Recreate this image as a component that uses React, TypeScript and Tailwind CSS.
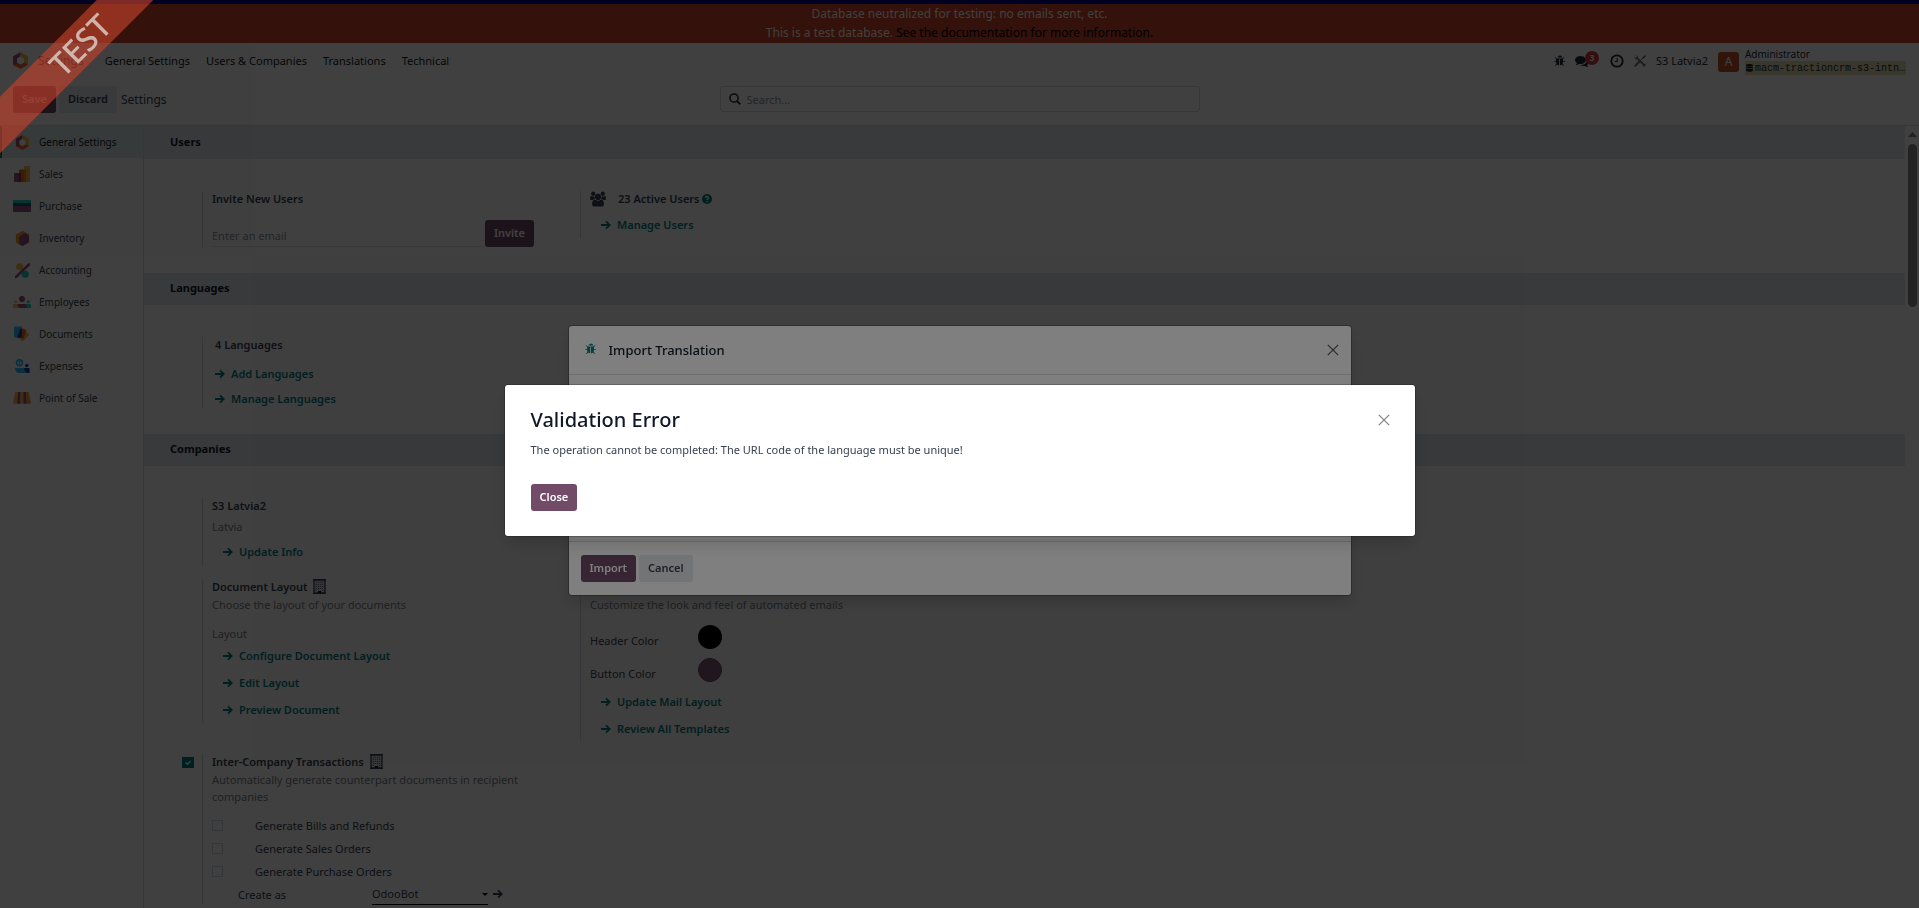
import type { ReactNode } from "react";

/* ---------- glyph icons ---------- */

const Bug = ({ className }: { className: string }) => (
  <svg viewBox="0 0 1792 1792" fill="currentColor" className={className} aria-hidden="true">
    <path d="M1632 960q0 26-19 45t-45 19h-224q0 171-67 290l208 209q19 19 19 45t-19 45q-18 19-45 19t-45-19l-198-197q-5 5-15 13t-42 28.500-65 36.500-82 29-97 13v-896h-128v896q-51 0-101.500-13.500t-87-33-66-39-43.500-32.500l-15-14-183 207q-20 21-48 21-24 0-43-16-19-18-20.500-44.500t15.500-46.500l202-227q-58-114-58-274h-224q-26 0-45-19t-19-45 19-45 45-19h224v-294l-173-173q-19-19-19-45t19-45 45-19 45 19l173 173h844l173-173q19-19 45-19t45 19 19 45-19 45l-173 173v294h224q26 0 45 19t19 45zm-416-576h-640q0-133 93.500-226.500t226.500-93.500 226.500 93.500 93.500 226.500z" />
  </svg>
);

const Comments = () => (
  <svg viewBox="0 0 1792 1792" fill="currentColor" className="h-[14px] w-[14px]" aria-hidden="true">
    <path d="M1408 768q0 139-94 257t-256.500 186.500-353.500 68.500q-86 0-176-16-124 88-278 128-36 9-86 16h-3q-11 0-20.500-8t-11.500-21q-1-3-1-6.500t.5-6.500 2-6l2.500-5 3.500-5.500 4-5 4.500-5 4-4.500q5-6 23-25t26-29.500 22.500-29 25-38.500 20.500-44q-124-72-195-177t-71-224q0-139 94-257t256.500-186.500 353.500-68.500 353.500 68.500 256.500 186.500 94 257zm384 256q0 120-71 224.500t-195 176.500q10 24 20.500 44t25 38.500 22.500 29 26 29.500 23 25q1 1 4 4.500t4.500 5 4 5 3.500 5.500l2.500 5 2 6 .5 6.500-1 6.500q-3 14-13 22t-22 7q-50-7-86-16-154-40-278-128-90 16-176 16-271 0-472-132 58 4 88 4 161 0 309-45t264-129q125-92 192-212t67-254q0-77-23-152 129 71 204 178t75 230z" />
  </svg>
);

const Users = () => (
  <svg viewBox="0 0 1920 1792" fill="currentColor" className="h-4 w-4" aria-hidden="true">
    <path d="M593 896q-162 5-265 128h-134q-82 0-138-40.500t-56-118.500q0-353 124-353 6 0 43.500 21t97.500 42.500 119 21.500q67 0 133-23-5 37-5 66 0 139 81 256zm1071 637q0 120-73 189.500t-194 69.500h-874q-121 0-194-69.500t-73-189.500q0-53 3.500-103.500t14-109 26.500-108.500 43-97.500 62-81 85.500-53.500 111.500-20q10 0 43 21.500t73 48 107 48 135 21.500 135-21.500 107-48 73-48 43-21.500q61 0 111.500 20t85.500 53.500 62 81 43 97.500 26.500 108.500 14 109 3.500 103.500zm-1024-1277q0 106-75 181t-181 75-181-75-75-181 75-181 181-75 181 75 75 181zm704 384q0 159-112.500 271.500t-271.500 112.500-271.500-112.500-112.500-271.500 112.500-271.500 271.500-112.500 271.500 112.500 112.500 271.500zm576 225q0 78-56 118.500t-138 40.500h-134q-103-123-265-128 81-117 81-256 0-29-5-66 66 23 133 23 59 0 119-21.500t97.500-42.500 43.500-21q124 0 124 353zm-128-609q0 106-75 181t-181 75-181-75-75-181 75-181 181-75 181 75 75 181z" />
  </svg>
);

const Clock = () => (
  <svg viewBox="0 0 14 14" fill="none" stroke="currentColor" className="h-[14px] w-[14px]" aria-hidden="true">
    <circle cx="7" cy="7" r="5.700" strokeWidth="1.800" />
    <path d="M7.300 3.800v3.700H4.700" strokeWidth="1.100" />
  </svg>
);

const Tools = () => (
  <svg viewBox="0 0 12 12" fill="none" stroke="currentColor" strokeLinecap="round" className="h-3 w-3" aria-hidden="true">
    <path d="M2.800 2.800l7.700 7.700" strokeWidth="1.800" />
    <path d="M.8 2.600c.2 1.400 2 1.800 2.800.8.500-.9.100-2.200-.9-2.600M9.400 11.100c-.5-.9.500-2 1.700-1.700" strokeWidth="1" />
    <path d="M1.300 10.700l4-4" strokeWidth="2" />
    <path d="M6 6l4-4" strokeWidth="1" />
    <path d="M9.300 2.700l1.600-1.600" strokeWidth="1.700" />
  </svg>
);

const Magnifier = () => (
  <svg viewBox="0 0 12 12" fill="none" stroke="currentColor" className="h-3 w-3 shrink-0" aria-hidden="true">
    <circle cx="5" cy="5" r="4.100" strokeWidth="1.500" />
    <path d="M8 8l3.300 3.300" strokeWidth="1.900" />
  </svg>
);

const Database = () => (
  <svg viewBox="0 0 8 9" fill="currentColor" className="h-2 w-[7px] shrink-0" aria-hidden="true">
    <ellipse cx="4" cy="1.500" rx="4" ry="1.500" />
    <path d="M0 2.700c1 1 7 1 8 0v1.500c-1 1.200-7 1.200-8 0zM0 5c1 1 7 1 8 0v2.300C7 9.300 1 9.300 0 7.300z" />
  </svg>
);

const Arrow = () => (
  <svg viewBox="0 0 10 10" fill="none" stroke="currentColor" strokeWidth="1.800" className="h-[10px] w-[10px] shrink-0" aria-hidden="true">
    <path d="M0 5h8.600M5 1.300L8.800 5 5 8.700" />
  </svg>
);

const Cross = () => (
  <svg viewBox="0 0 12 12" fill="none" stroke="currentColor" strokeWidth="1.200" className="h-3 w-3" aria-hidden="true">
    <path d="M.8.8l10.400 10.400M11.200.8L.8 11.200" />
  </svg>
);

const Help = () => (
  <svg viewBox="0 0 10 10" className="h-[10px] w-[10px]" aria-hidden="true">
    <circle cx="5" cy="5" r="5" fill="#017e84" />
    <path d="M3.400 3.900C3.500 2 6.600 2.100 6.500 3.900 6.500 4.900 5 4.900 5 6.100" fill="none" stroke="#fff" strokeWidth="1.300" />
    <path d="M4.300 6.900h1.400v1.300H4.300z" fill="#fff" />
  </svg>
);

const Building = () => (
  <svg viewBox="0 0 13 15" className="h-[15px] w-[13px]" role="img" aria-label="Values set here are company-specific.">
    <rect x="1" y="1" width="11" height="13" fill="#d1d5db" stroke="#374151" strokeWidth="1.300" />
    <path d="M0 .7h13M0 14.300h13" stroke="#374151" strokeWidth="1.300" />
    <path d="M3 3.500h7.500M3 5.500h7.500M3 7.500h7.500M3 9.500h7.500M3 11.500h2M9 11.500h2" stroke="#6b7280" strokeWidth="1" strokeDasharray="1 1" />
    <path d="M5 12h3v2H5z" fill="#111827" />
  </svg>
);

/* ---------- application icons ---------- */

const HexLogo = ({ className }: { className: string }) => (
  <svg viewBox="0 0 16 16" className={className} aria-hidden="true">
    <path d="M8 0L1 4v8l3 1.700L5.200 9.500 5 6l3-1.500z" fill="#985184" />
    <path d="M8 0l7 4v8l-4-1.500V6.200L8 4.500z" fill="#fbb945" />
    <path d="M15 12l-7 4-7-4 4-2.200 3 1.700 3-1.700z" fill="#f86126" />
    <path d="M8 4.300l3.300 1.900v3.700L8 11.800 4.700 9.900V6.200z" fill="#fff" />
  </svg>
);

const appIcons: Record<string, ReactNode> = {
  "General Settings": <HexLogo className="h-[15px] w-[15px]" />,
  Sales: (
    <svg viewBox="0 0 16 16" className="h-4 w-4" aria-hidden="true">
      <rect x="10" y="0" width="6" height="16" rx="1" fill="#fbb945" />
      <rect x="5" y="3.500" width="7" height="12.500" rx="1" fill="#f86126" />
      <rect x="0" y="7" width="7" height="9" rx="1" fill="#985184" />
      <path d="M5 7h1a1 1 0 011 1v8H5z" fill="#962b48" />
      <path d="M10 3.500h1a1 1 0 011 1V16h-2z" fill="#e78e1c" />
    </svg>
  ),
  Purchase: (
    <svg viewBox="0 0 18 12" className="h-3 w-[18px]" aria-hidden="true">
      <rect width="18" height="12" rx="1" fill="#985184" />
      <path d="M1 0h16a1 1 0 011 1v2.500H0V1a1 1 0 011-1z" fill="#1ad3bb" />
      <path d="M0 3h18v3H0z" fill="#005e7a" />
    </svg>
  ),
  Inventory: (
    <svg viewBox="0 0 16 16" className="h-[15px] w-[15px]" aria-hidden="true">
      <path d="M8 0l7 4v8l-7 4-7-4V4z" fill="#f86126" />
      <path d="M8 0l3 1.700L4.500 5.500V14L1 12V4z" fill="#f89a33" />
      <path d="M10.500 2.500L15 5v7l-7 4-3.500-2V6z" fill="#985184" />
    </svg>
  ),
  Accounting: (
    <svg viewBox="0 0 16 16" className="h-[15px] w-[15px]" aria-hidden="true">
      <circle cx="5" cy="4" r="3.800" fill="#fbb945" />
      <circle cx="11" cy="12" r="3.800" fill="#1ad3bb" />
      <path d="M1 15L15 1.500" stroke="#985184" strokeWidth="2.800" strokeLinecap="round" />
    </svg>
  ),
  Employees: (
    <svg viewBox="0 0 18 12" className="h-3 w-[18px]" aria-hidden="true">
      <circle cx="9" cy="3" r="3" fill="#985184" />
      <circle cx="2.700" cy="5.800" r="1.500" fill="#fbb945" />
      <circle cx="15.300" cy="5.800" r="1.500" fill="#1ad3bb" />
      <path d="M0 12V9a1 1 0 011-1h5v4z" fill="#fbb945" />
      <path d="M18 12V9a1 1 0 00-1-1h-5v4z" fill="#1ad3bb" />
      <path d="M4.500 8h8c1 1 1.500 2.500 2 4h-8c-1-1-2-2-2-4z" fill="#985184" />
    </svg>
  ),
  Documents: (
    <svg viewBox="0 0 16 16" className="h-4 w-4" aria-hidden="true">
      <path d="M8 3l7.500 5.500L9 15.500 3 11z" fill="#fbb945" />
      <path d="M7 2l5.500 2L9.500 13 3 11z" fill="#f86126" />
      <rect x="0" y="0.500" width="8" height="11" rx="1" fill="#2ebcfa" />
      <path d="M6.500 2.500L8 3v7.500a1 1 0 01-1 1H3z" fill="#144496" />
    </svg>
  ),
  Expenses: (
    <svg viewBox="0 0 16 14" className="h-[14px] w-4" aria-hidden="true">
      <circle cx="5.500" cy="3.800" r="3" fill="none" stroke="#2ebcfa" strokeWidth="1.700" />
      <path d="M5.500 2v3.600" stroke="#2ebcfa" strokeWidth="1.300" />
      <circle cx="12.800" cy="6.500" r="1.700" fill="#144496" />
      <path d="M1 9h13c1 0 1.500.5 1.500 1.500V14H5c-2 0-4-2-4-5z" fill="#2ebcfa" />
      <path d="M10 9h4.500c.8 0 1 .5 1 1.500V14H13c-1.500-1-3-3-3-5z" fill="#144496" />
    </svg>
  ),
  "Point of Sale": (
    <svg viewBox="0 0 18 12" className="h-3 w-[18px]" aria-hidden="true">
      <path d="M2 0h3L4.500 11c-.5 1.200-4 1.200-4.500 0z" fill="#fbb945" />
      <path d="M5 0h2.700v11c-.5 1.200-3 1.200-3.700 0z" fill="#985184" />
      <path d="M7.500 0h3v11c-.5 1.200-2.500 1.200-3 0z" fill="#fbb945" />
      <path d="M10.300 0H13l1 11c-.7 1.200-3 1.200-3.700 0z" fill="#985184" />
      <path d="M13 0h3l2 11c-.5 1.200-3.500 1.200-4 0z" fill="#fbb945" />
      <path d="M13 0h1.500L18 11c-.5 1.200-3.500 1.200-4 0z" fill="#f89a33" />
    </svg>
  ),
};

const apps = ["General Settings", "Sales", "Purchase", "Inventory", "Accounting", "Employees", "Documents", "Expenses", "Point of Sale"];

/* ---------- building blocks ---------- */

function Button({ children, kind = "primary" }: { children: ReactNode; kind?: "primary" | "secondary" }) {
  const tone = kind === "primary" ? "bg-[#714b67] text-white" : "bg-[#e7e9ed] text-[#374151]";
  return <button type="button" className={`h-[27px] shrink-0 rounded-[3px] px-[9px] pb-[2px] font-semibold ${tone}`}>{children}</button>;
}

function LinkRow({ children, className = "pl-[11px]" }: { children: ReactNode; className?: string }) {
  return (
    <div className={className}>
      <a href="#" className="flex h-[17px] w-fit items-center gap-[6px] font-semibold text-[#017e84]">
        <Arrow />
        <span className="pb-px">{children}</span>
      </a>
    </div>
  );
}

function Setting({ children, check }: { children?: ReactNode; check?: ReactNode }) {
  return (
    <div className="flex w-[378px] items-start">
      <div className="w-7 shrink-0 pt-[3px] pl-2">{check}</div>
      <div className="flex min-w-0 flex-1 flex-col border-l border-[#d8dadd] pr-[18px] pl-[9px]">{children}</div>
    </div>
  );
}

function Section({ title, children }: { title: string; children: ReactNode }) {
  return (
    <section>
      <h2 className="flex h-8 items-center bg-[#e2e6e9] pb-[3px] pl-[26px] text-[11px] font-bold text-[#111827]">{title}</h2>
      <div className="flex flex-col gap-[13px] pt-8 pb-[26px] pl-[30px]">{children}</div>
    </section>
  );
}

const Row = ({ children }: { children: ReactNode }) => <div className="flex items-start">{children}</div>;
const Title = ({ children }: { children: ReactNode }) => (
  <h3 className="flex h-[17px] items-center gap-[6px] pb-[2px] font-semibold">{children}</h3>
);
const Muted = ({ children }: { children: ReactNode }) => <p className="leading-[17px] text-[#7c828c]">{children}</p>;

function OptionRow({ id, label }: { id: string; label: string }) {
  return (
    <div className="flex h-[23px] items-center gap-8">
      <input id={id} type="checkbox" className="h-[11px] w-[11px] appearance-none border border-[#d3d6da]" />
      <label htmlFor={id}>{label}</label>
    </div>
  );
}

function SettingsPage() {
  return (
    <div className="min-w-0 flex-1 overflow-hidden border-t border-[#e2e6e9]">
      <Section title="Users">
        <Row>
          <Setting>
            <Title>
              <label htmlFor="invite">Invite New Users</label>
            </Title>
            <div className="mt-3 flex items-end">
              <input
                id="invite"
                placeholder="Enter an email"
                className="h-[22px] min-w-0 flex-1 border-b border-[#e0e2e4] outline-none placeholder:text-[#8d939c]"
              />
              <Button>Invite</Button>
            </div>
          </Setting>
          <Setting>
            <Title>
              <Users />
              <span className="ml-[6px] flex items-center gap-[2px]">
                23 Active Users <Help />
              </span>
            </Title>
            <div className="h-[30px] pt-2">
              <LinkRow>Manage Users</LinkRow>
            </div>
          </Setting>
        </Row>
      </Section>

      <Section title="Languages">
        <Row>
          <Setting>
            <div className="flex flex-col gap-2 pb-px pl-[3px]">
              <div className="pb-[3px]">
                <Title>4 Languages</Title>
              </div>
              <LinkRow className="">Add Languages</LinkRow>
              <LinkRow className="">Manage Languages</LinkRow>
            </div>
          </Setting>
        </Row>
      </Section>

      <Section title="Companies">
        <Row>
          <Setting>
            <Title>S3 Latvia2</Title>
            <div className="flex flex-col gap-2 pt-[3px] pb-[6px]">
              <Muted>Latvia</Muted>
              <LinkRow>Update Info</LinkRow>
            </div>
          </Setting>
        </Row>
        <Row>
          <Setting>
            <Title>
              Document Layout <Building />
            </Title>
            <Muted>Choose the layout of your documents</Muted>
            <div className="pt-3 pb-[5px]">
              <Muted>Layout</Muted>
              <div className="flex flex-col gap-[10px] pt-[5px]">
                <LinkRow>Configure Document Layout</LinkRow>
                <LinkRow>Edit Layout</LinkRow>
                <LinkRow>Preview Document</LinkRow>
              </div>
            </div>
          </Setting>
          <Setting>
            <Title>Email Templates</Title>
            <Muted>Customize the look and feel of automated emails</Muted>
            <div className="flex flex-col gap-[9px] pt-[12px] pb-1">
              <div className="flex h-6 items-center">
                <label htmlFor="header-color" className="w-[108px] pt-[6px]">Header Color</label>
                <button id="header-color" type="button" className="h-6 w-6 rounded-full bg-black" />
              </div>
              <div className="flex h-6 items-center">
                <label htmlFor="button-color" className="w-[108px] pt-[6px]">Button Color</label>
                <button id="button-color" type="button" className="h-6 w-6 rounded-full border border-[#6d4763] bg-[#875a7b]" />
              </div>
              <div className="flex flex-col gap-[10px] pt-[2px]">
                <LinkRow>Update Mail Layout</LinkRow>
                <LinkRow>Review All Templates</LinkRow>
              </div>
            </div>
          </Setting>
        </Row>
        <Row>
          <Setting
            check={
              <span className="relative block h-3 w-3">
                <input id="inter-company" type="checkbox" defaultChecked className="block h-[11px] w-3 appearance-none bg-[#017e84]" />
                <svg viewBox="0 0 12 11" fill="none" stroke="#fff" strokeWidth="1.300" className="pointer-events-none absolute inset-0 h-[11px] w-3" aria-hidden="true">
                  <path d="M3.500 5.500l2 1.800 3-3.300" />
                </svg>
              </span>
            }
          >
            <Title>
              <label htmlFor="inter-company">Inter-Company Transactions</label> <Building />
            </Title>
            <Muted>Automatically generate counterpart documents in recipient companies</Muted>
            <div className="pt-[9px]">
              <OptionRow id="bills" label="Generate Bills and Refunds" />
              <OptionRow id="sales" label="Generate Sales Orders" />
              <OptionRow id="purchases" label="Generate Purchase Orders" />
              <div className="flex items-center pl-[26px]">
                <label htmlFor="create-as" className="w-[134px]">Create as</label>
                <span className="relative flex w-[116px] items-center">
                  <select id="create-as" className="h-[22px] w-full appearance-none border-b border-black outline-none">
                    <option>OdooBot</option>
                  </select>
                  <svg viewBox="0 0 6 3" className="pointer-events-none absolute right-0 h-[3px] w-[6px]" aria-hidden="true">
                    <path d="M0 0h6L3 3z" />
                  </svg>
                </span>
                <button type="button" className="pl-[5px]" aria-label="Open record">
                  <Arrow />
                </button>
              </div>
            </div>
          </Setting>
        </Row>
      </Section>
    </div>
  );
}

export default function App() {
  return (
    <div className="flex h-screen flex-col overflow-hidden bg-white font-['Noto_Sans',sans-serif] text-[11px] leading-[17px] text-[#374151]">
      <div className="h-1 shrink-0 bg-[#00008b]" />
      <div className="shrink-0 bg-[#d0442c] pb-px text-center text-[12px] leading-[19px] text-[#fffaf0]">
        <p>Database neutralized for testing: no emails sent, etc.</p>
        <p>
          This is a test database.{" "}
          <a href="#" className="text-black">See the documentation for more information.</a>
        </p>
      </div>

      <header className="flex h-[37px] shrink-0 items-center pr-[13px] pb-[2px] pl-3 text-[#111827]">
        <a href="#" className="flex items-center gap-[9px] text-[12px]">
          <HexLogo className="h-[17px] w-[17px]" />
          Settings
        </a>
        <nav className="ml-[21px] flex gap-4">
          <a href="#">General Settings</a>
          <a href="#">Users &amp; Companies</a>
          <a href="#">Translations</a>
          <a href="#">Technical</a>
        </nav>
        <div className="ml-auto flex items-center text-[#1f2937]">
          <button type="button" aria-label="Open developer tools">
            <Bug className="h-3 w-3" />
          </button>
          <button type="button" aria-label="Messages" className="relative ml-[9px] w-6">
            <Comments />
            <span className="absolute -top-[3px] right-0 flex h-[14px] w-[14px] items-center justify-center rounded-full bg-[#d23f3a] text-[8px] font-bold text-white">3</span>
          </button>
          <button type="button" aria-label="Activities" className="ml-[11px]">
            <Clock />
          </button>
          <button type="button" aria-label="Tools" className="ml-[10px] text-[#6b7280]">
            <Tools />
          </button>
          <button type="button" className="ml-[10px]">S3 Latvia2</button>
          <button type="button" className="ml-[10px] flex items-center gap-[6px] pt-[2px] text-left">
            <span className="flex h-5 w-[21px] items-center justify-center rounded-[3px] bg-[#c8562a] text-[12px] text-white">A</span>
            <span className="flex flex-col text-[10px] leading-[13px]">
              <span>Administrator</span>
              <span className="flex h-[14px] items-center gap-[2px] bg-[#e8e0b0] px-px font-['Liberation_Mono',monospace]">
                <Database />
                macm-tractioncrm-s3-intn…
              </span>
            </span>
          </button>
        </div>
      </header>

      <div className="grid h-[46px] shrink-0 grid-cols-[1fr_480px_1fr] items-start border-b border-[#d8dadd] px-[13px] pt-[6px]">
        <div className="flex items-center gap-[3px]">
          <Button>Save</Button>
          <Button kind="secondary">Discard</Button>
          <h1 className="pl-px text-[12px]">Settings</h1>
        </div>
        <label className="flex h-[26px] items-center gap-[6px] rounded-[3px] border border-[#d8dadd] px-2 text-[#1f2937]">
          <Magnifier />
          <input type="search" aria-label="Search" placeholder="Search..." className="min-w-0 flex-1 outline-none placeholder:text-[#8d939c]" />
        </label>
      </div>

      <div className="flex min-h-0 flex-1">
        <aside className="w-36 shrink-0 border-r border-[#d8dadd]">
          {apps.map((name) => (
            <a
              key={name}
              href="#"
              className={`flex h-8 items-center gap-2 text-[10px] ${
                name === "General Settings" ? "border-l-2 border-[#017e84] bg-[#dbe8ea] pl-[11px] text-[#111827]" : "pl-[13px]"
              }`}
            >
              <span className="flex w-[18px] justify-center">{appIcons[name]}</span>
              {name}
            </a>
          ))}
        </aside>
        <SettingsPage />
        <div className="flex w-[14px] shrink-0 flex-col items-center gap-[7px] pt-[6px]">
          <svg viewBox="0 0 9 5" className="h-[5px] w-[9px]" fill="#868686" aria-hidden="true">
            <path d="M0 5L4.500 0 9 5z" />
          </svg>
          <div className="h-[163px] w-[9px] rounded-full bg-[#868686]" />
        </div>
      </div>

      {/* Import wizard */}
      <div className="fixed inset-0 flex items-center justify-center bg-black/50 pt-[13px]">
        <div role="dialog" aria-label="Import Translation" className="flex w-[782px] flex-col rounded-[3px] bg-white shadow-[0_0_0_1px_rgba(0,0,0,0.25),0_8px_16px_rgba(0,0,0,0.15)]">
          <div className="flex h-[49px] items-center border-b border-[#d8dadd] px-3 text-[#111827]">
            <button type="button" aria-label="Debug view" className="pb-[2px] pl-1 text-[#017e84]">
              <Bug className="h-3 w-3" />
            </button>
            <h2 className="ml-3 text-[13px] font-medium">Import Translation</h2>
            <button type="button" aria-label="Close wizard" className="ml-auto pb-px text-[#555]">
              <Cross />
            </button>
          </div>
          <div className="h-[166px]" />
          <div className="flex items-center gap-[3px] border-t border-[#d8dadd] px-3 py-[13px]">
            <Button>Import</Button>
            <Button kind="secondary">Cancel</Button>
          </div>
        </div>
      </div>

      {/* Error dialog */}
      <div className="fixed inset-0 flex items-center justify-center bg-black/50 pt-[13px]">
        <div role="alertdialog" aria-label="Validation Error" className="w-[910px] rounded-[3px] bg-white pt-[21px] pr-[25px] pb-[25px] pl-[26px] shadow-[0_0_0_1px_rgba(0,0,0,0.2),0_8px_16px_rgba(0,0,0,0.15)]">
          <div className="flex items-center">
            <h2 className="text-[20px] leading-[27px] font-medium text-[#111827]">Validation Error</h2>
            <button type="button" aria-label="Close dialog" className="ml-auto text-[#7f7f7f]">
              <Cross />
            </button>
          </div>
          <p className="pt-2 pb-[26px]">The operation cannot be completed: The URL code of the language must be unique!</p>
          <Button>Close</Button>
        </div>
      </div>

      {/* Environment ribbon */}
      <div className="pointer-events-none fixed top-0 left-0 h-40 w-40 overflow-hidden">
        <div className="absolute top-[25px] left-[-70px] w-[300px] -rotate-45 bg-[#c2412b]/65 text-center text-[32px] leading-[40px] font-medium text-[#e4e0d8]/75">
          TEST
        </div>
      </div>
    </div>
  );
}
